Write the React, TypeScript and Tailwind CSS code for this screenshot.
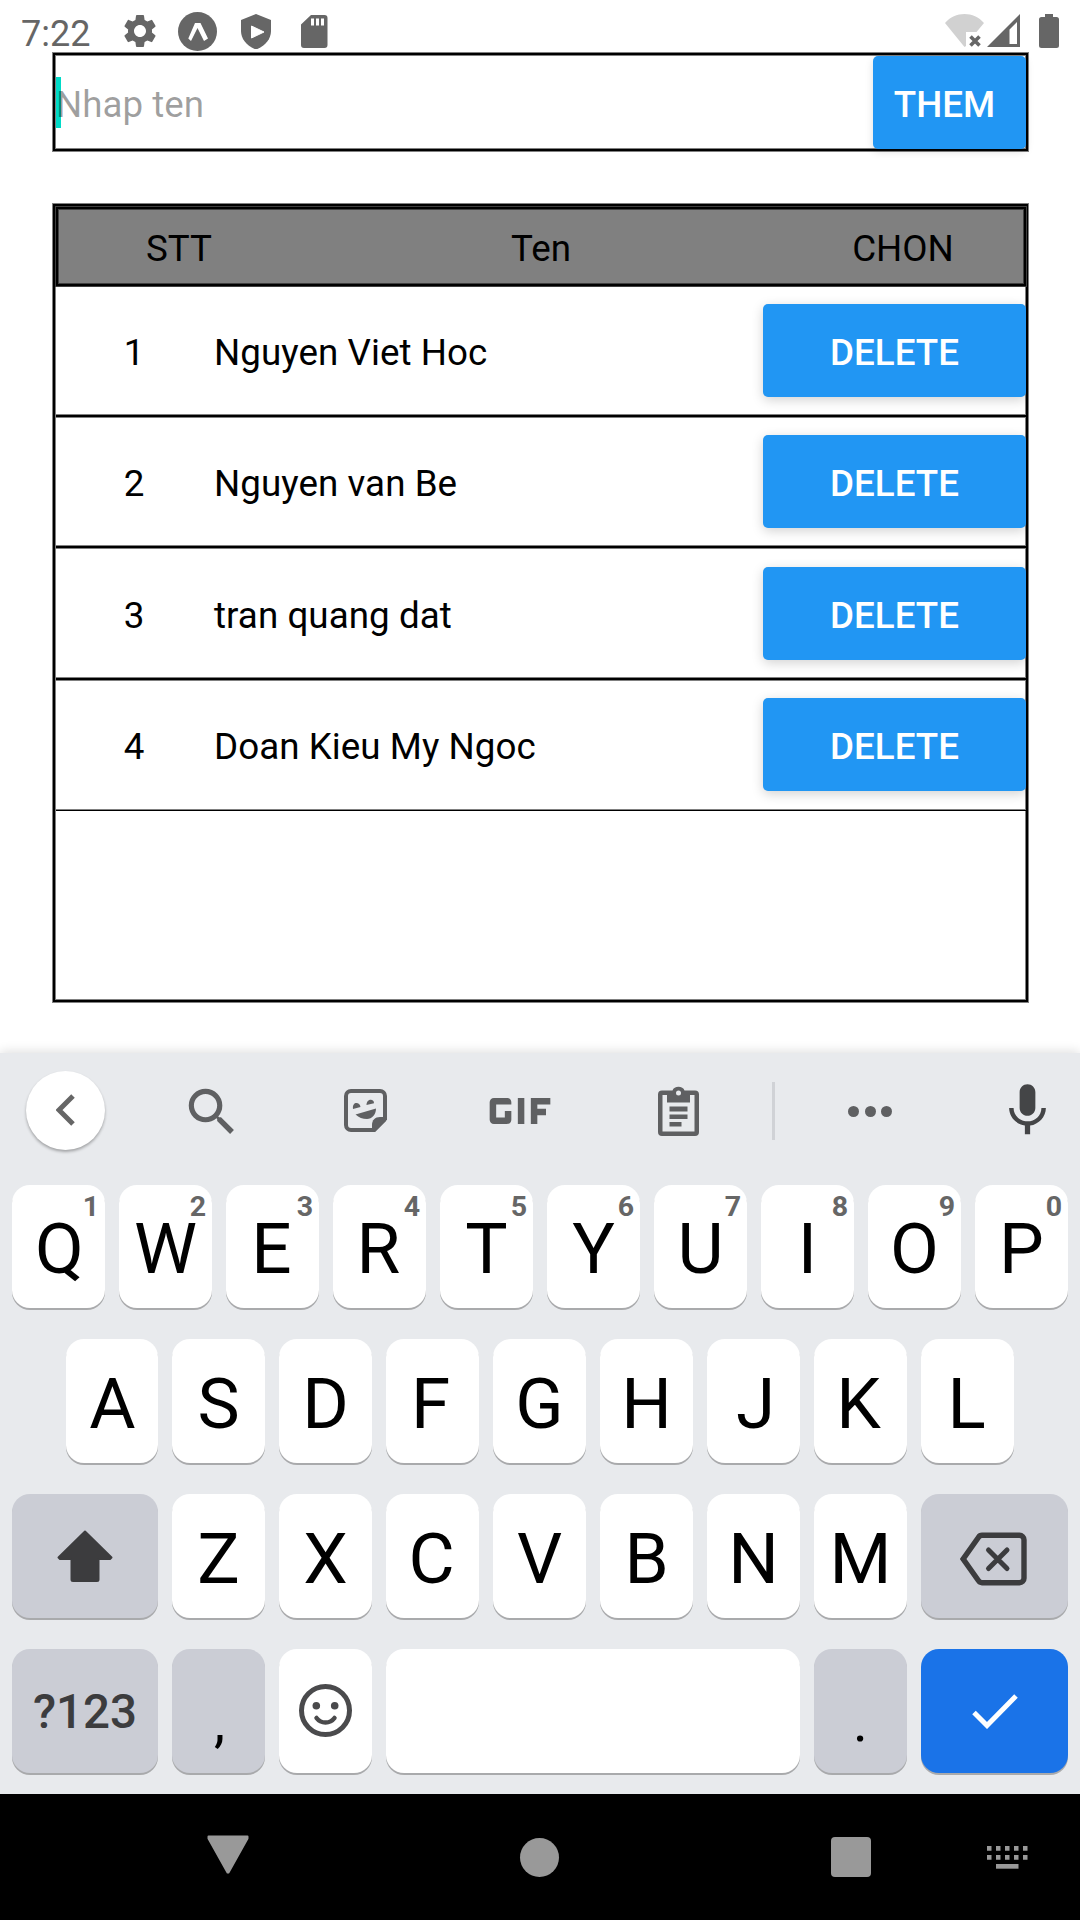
import type { ReactNode } from "react";
import { MdGif, MdMic, MdSearch, MdSettings } from "react-icons/md";

const people = [
  { id: 1, name: "Nguyen Viet Hoc", row: "h-[127px] pt-[17px]", line: "h-1 border-y" },
  { id: 2, name: "Nguyen van Be", row: "h-[127px] pt-[17px]", line: "h-1 border-y" },
  { id: 3, name: "tran quang dat", row: "h-[128px] pt-[18px]", line: "h-1 border-y" },
  { id: 4, name: "Doan Kieu My Ngoc", row: "h-[128px] pt-[17px]", line: "h-0.5 border-t" },
];

// Optical centring of glyphs with uneven side bearings.
const nudge: Record<string, string> = {
  Q: "pl-0.5",
  E: "pr-0.5",
  R: "pr-0.5",
  A: "pl-px",
  F: "pr-[4px]",
  J: "pl-[4px]",
  K: "pr-[4px]",
  L: "pr-0.5",
  C: "pr-0.5",
};

function StatusBar() {
  return (
    <header className="flex h-[52px] shrink-0 items-start pl-[21px] pr-[21px] text-[#666]">
      <span className="w-[99px] pt-[16px] text-[36px] leading-[37px]">7:22</span>
      <MdSettings className="mt-[11px] size-10 shrink-0" />
      <svg className="ml-[18px] mt-3 h-[39px] w-[39px]" viewBox="0 0 39 39">
        <circle cx="19.5" cy="19.5" r="19.5" fill="#666" />
        <path d="M17 11h5.500l7.500 15.500-4 2.500-6.500-13-6.500 13-2.700-2.500z" fill="#fff" />
      </svg>
      <svg className="ml-6 mt-3.5 h-[35px] w-[30px]" viewBox="0 0 30 35">
        <path d="M15 0 30 6v11c0 8-6 15.500-15 18.500C6 32.500 0 25 0 17V6z" fill="#666" />
        <path d="M10.500 12v12L23 18z" fill="#fff" stroke="#fff" strokeLinejoin="round" />
      </svg>
      <svg className="ml-[30px] mt-[15px] h-[33px] w-[27px]" viewBox="0 0 27 33">
        <path d="M10 0h13.500a3 3 0 0 1 3 3v27a3 3 0 0 1-3 3H3a3 3 0 0 1-3-3V9.500z" fill="#666" />
        <path d="M10 3.500h3v7h-3zM15 3.500h3v7h-3zM20 3.500h3v7h-3z" fill="#fff" />
      </svg>
      <span className="flex-1" />
      <svg className="mt-3.5 h-[33px] w-[39px]" viewBox="0 0 39 33">
        <path d="M0 9C10-3 29-3 39 9l-7.500 9H21v14l-1.500 1z" fill="#d1d1d1" />
        <path d="m25.500 22.500 9 9M34.500 22.500l-9 9" stroke="#666" strokeWidth="3.600" />
      </svg>
      <svg className="ml-[3px] mt-[14px] h-[33px] w-[33px]" viewBox="0 0 33 33">
        <path fillRule="evenodd" d="M33 0v33H0zM30 8 22.500 15.500V30H30z" fill="#666" />
      </svg>
      <svg className="ml-[19px] mt-3.5 h-[34px] w-5" viewBox="0 0 20 34">
        <path d="M6 0h8v3h3.500A2.500 2.500 0 0 1 20 5.500v26a2.500 2.500 0 0 1-2.500 2.500h-15A2.500 2.500 0 0 1 0 31.500v-26A2.500 2.500 0 0 1 2.500 3H6z" fill="#666" />
      </svg>
    </header>
  );
}

function NameForm() {
  return (
    <div className="ml-[52px] flex h-[100px] w-[977px] shrink-0 py-[3.500px] pl-1 pr-[3px] shadow-[inset_0_0_0_1px_#808080,inset_0_0_0_3px_#000,inset_0_0_0_4px_#808080]">
      <div className="relative flex-1">
        <span className="absolute left-0 top-[21px] h-[51px] w-[5px] bg-[#00dbc8]" />
        <span className="relative block pt-[27px] leading-[43px] text-black/[0.38]">Nhap ten</span>
      </div>
      <button className="h-[93px] w-[153px] rounded-[5px] bg-[#2196f3] pr-[10px] pt-1 font-medium text-white shadow-[0_3px_8px_rgba(0,0,0,0.120)]">
        THEM
      </button>
    </div>
  );
}

function PeopleTable() {
  return (
    <div className="ml-[52px] mt-[51px] h-[800px] w-[977px] shrink-0 p-[3px] shadow-[inset_0_0_0_1px_#808080,inset_0_0_0_3px_#000,inset_0_0_0_4px_#808080]">
      <div className="grid h-[81px] w-[972px] grid-cols-[248px_476px_248px] items-center bg-[#808080] pt-1 text-center shadow-[inset_0_0_0_1px_#404040,inset_0_0_0_3px_#000,inset_0_0_0_4px_#404040]">
        <span>STT</span>
        <span>Ten</span>
        <span>CHON</span>
      </div>
      {people.map((p) => (
        <div key={p.id}>
          <div className={"flex overflow-hidden " + p.row}>
            <span className="flex h-[93px] w-[158px] items-center justify-center pt-1">{p.id}</span>
            <span className="flex h-[93px] flex-1 items-center pl-px pt-1 tracking-[0.050px]">{p.name}</span>
            <button className="h-[93px] w-[263px] rounded-[5px] bg-[#2196f3] pt-1 font-medium text-white shadow-[0_3px_12px_rgba(0,0,0,0.180)]">
              DELETE
            </button>
          </div>
          <div className={"ml-px border-[#808080] bg-black " + p.line} />
        </div>
      ))}
    </div>
  );
}

function Toolbar() {
  return (
    <div className="flex h-[132px] shrink-0 items-start text-[#5f6062]">
      <span className="ml-[26px] mt-[18px] flex size-[79px] items-center justify-center rounded-full bg-white pb-px shadow-[0_2px_3px_rgba(0,0,0,0.300)]">
        <svg className="h-8 w-[19px]" viewBox="0 0 19 32">
          <path d="M17 2 3 16l14 14" fill="none" stroke="#666" strokeWidth="5" />
        </svg>
      </span>
      <MdSearch className="ml-[76px] mt-[28px] size-[62px]" />
      <svg className="ml-[101px] mt-9 h-[43px] w-[43px]" viewBox="0 0 43 43">
        <path d="M7 2h29a5 5 0 0 1 5 5v23L30 41H7a5 5 0 0 1-5-5V7a5 5 0 0 1 5-5Z" fill="none" stroke="#5f6062" strokeWidth="4" />
        <path d="M28 42v-6c0-5 3-8 8-8h6v4L31 43z" fill="#5f6062" />
        <path d="M11.500 25.500 32 19.500c0 6-4 10.500-9 10.500-4.500 0-8-1.500-11.500-4.500ZM9 20c-1-8 7-7 7.500-2ZM22.500 16c0-7 8-6.500 7.500-1.800Z" fill="#5f6062" />
      </svg>
      <MdGif className="ml-[81px] mt-[5.500px] h-[104px] w-[104px]" />
      <svg className="ml-[85.500px] mt-[32.500px] h-[50px] w-[41px]" viewBox="0 0 41 50">
        <path fillRule="evenodd" d="M4 4.500h10.500C16-.500 25-.500 26.500 4.500H37a4 4 0 0 1 4 4V46a4 4 0 0 1-4 4H4a4 4 0 0 1-4-4V8.500a4 4 0 0 1 4-4ZM4.500 9v36.500h32V9H32v7.500H9V9Z" fill="#5f6062" />
        <circle cx="20.500" cy="7" r="2.500" fill="#e8eaed" />
        <path d="M11.500 20.500h18v5h-18zM11.500 28.500h18v4.500h-18zM11.500 36h12v4.500h-12z" fill="#5f6062" />
      </svg>
      <span className="ml-[73.500px] mt-[29px] h-[58px] w-[3px] bg-[#d0d2d6]" />
      <span className="ml-[73px] mt-[52.500px] flex gap-[5.500px]">
        <i className="size-[11px] rounded-full bg-[#5f6062]" />
        <i className="size-[11px] rounded-full bg-[#5f6062]" />
        <i className="size-[11px] rounded-full bg-[#5f6062]" />
      </span>
      <MdMic className="ml-[104px] mt-[26px] size-[63px] text-[#444547]" />
    </div>
  );
}

function Key({ children, hint, className = "w-[93px] bg-white" }: { children?: ReactNode; hint?: string; className?: string }) {
  return (
    <div className={"relative flex shrink-0 items-center justify-center rounded-[18px] shadow-[0_2px_0_#a9aaac] " + className}>
      {hint && <span className="absolute right-[6px] top-[8px] text-[28.500px] font-bold leading-[28px] text-[#666]">{hint}</span>}
      {children}
    </div>
  );
}

function Letters({ text, hints }: { text: string; hints?: string }) {
  return (
    <>
      {text.split("").map((c, i) => (
        <Key key={c} hint={hints?.[i]} className={c === "A" ? "w-[92px] bg-white" : "w-[93px] bg-white"}>
          <span className={"mt-[5px] text-[71px] leading-[54px] " + (nudge[c] ?? "")}>{c}</span>
        </Key>
      ))}
    </>
  );
}

function Keyboard() {
  return (
    <section className="mt-[50px] flex h-[741px] shrink-0 flex-col bg-[#e8eaed] shadow-[0_-2px_10px_rgba(0,0,0,0.120)]">
      <Toolbar />
      <div className="flex flex-col gap-[31px] pl-3">
        <div className="flex h-[123px] gap-3.5">
          <Letters text="QWERTYUIOP" hints="1234567890" />
        </div>
        <div className="flex h-[124px] gap-3.5 pl-[54px]">
          <Letters text="ASDFGHJKL" />
        </div>
        <div className="flex h-[124px] gap-3.5">
          <Key className="w-[146px] bg-[#cbcdd5]">
            <svg className="h-[52px] w-14" viewBox="0 0 56 52">
              <path d="M28 1.500 54.500 27.500 53 29H41.500v20.500a1.500 1.500 0 0 1-1.500 1.500H16a1.500 1.500 0 0 1-1.500-1.500V29H3l-1.500-1.500z" fill="#3c3c3e" stroke="#3c3c3e" strokeWidth="2" strokeLinejoin="round" />
            </svg>
          </Key>
          <Letters text="ZXCVBNM" />
          <Key className="w-[147px] bg-[#cbcdd5]">
            <svg className="mr-[3px] mt-[5px] h-[54px] w-[67px]" viewBox="0 0 67 53">
              <path d="M22 2.800h37.500a4.500 4.500 0 0 1 4.500 4.500v38.400a4.500 4.500 0 0 1-4.500 4.500H22c-1.500 0-2.700-.7-3.500-2L3.200 26.500 18.500 4.800c.8-1.300 2-2 3.500-2Z" fill="none" stroke="#3c3c3e" strokeWidth="5.400" />
              <path d="m28.500 17.500 18.500 18.500M47 17.500 28.500 36" stroke="#3c3c3e" strokeWidth="5" strokeLinecap="round" />
            </svg>
          </Key>
        </div>
        <div className="flex h-[124px] gap-3.5">
          <Key className="w-[146px] bg-[#cbcdd5]">
            <span className="pt-[3px] text-[47.500px] font-medium text-[#3c3c3e]">?123</span>
          </Key>
          <Key className="w-[93px] bg-[#cbcdd5]">
            <span className="pl-0.5 pt-[22px] text-[56px]">,</span>
          </Key>
          <Key>
            <svg className="mb-0.5 size-[53px]" viewBox="0 0 53 53">
              <circle cx="26.500" cy="26.500" r="24" fill="none" stroke="#4a4a4c" strokeWidth="5" />
              <circle cx="17.300" cy="21.700" r="3.800" fill="#4a4a4c" />
              <circle cx="35.700" cy="21.700" r="3.800" fill="#4a4a4c" />
              <path d="M17.500 34c4.500 6 13.500 6 18 0" fill="none" stroke="#4a4a4c" strokeWidth="4.500" strokeLinecap="round" />
            </svg>
          </Key>
          <Key className="w-[414px] bg-white" />
          <Key className="w-[93px] bg-[#cbcdd5]">
            <span className="pt-[22px] text-[56px]">.</span>
          </Key>
          <Key className="w-[147px] bg-[#1a73e8]">
            <svg className="h-[35px] w-[46px]" viewBox="0 0 46 35">
              <path d="m2 18.500 13 13L44 2" fill="none" stroke="#fff" strokeWidth="5" />
            </svg>
          </Key>
        </div>
      </div>
    </section>
  );
}

function NavBar() {
  return (
    <nav className="flex h-[126px] shrink-0 items-start bg-black">
      <svg className="ml-[207px] mt-[41px] h-[39px] w-[42px]" viewBox="0 0 42 39">
        <path d="M1.500 1.500h39v2L21.500 37.500h-1L1.500 3.500z" fill="#999" stroke="#999" strokeWidth="2" strokeLinejoin="round" />
      </svg>
      <span className="ml-[271px] mt-[43.500px] size-[39px] rounded-full bg-[#999]" />
      <span className="ml-[272px] mt-[43px] size-10 rounded bg-[#999]" />
      <svg className="ml-[116px] mt-[52px] h-[23px] w-[41px]" viewBox="0 0 41 23">
        {[0, 9, 18, 27, 36].map((x) => (
          <path key={x} d={`M${x} 0h4.500v4.700h-4.500zM${x} 9h4.500v4.700h-4.500z`} fill="#999" />
        ))}
        <path d="M9 18h22.500v4.700H9z" fill="#999" />
      </svg>
    </nav>
  );
}

export default function App() {
  return (
    <main className="flex h-[1920px] w-[1080px] flex-col overflow-hidden bg-white font-['Roboto',sans-serif] text-[36.750px] leading-[43px] text-black">
      <StatusBar />
      <NameForm />
      <PeopleTable />
      <Keyboard />
      <NavBar />
    </main>
  );
}
